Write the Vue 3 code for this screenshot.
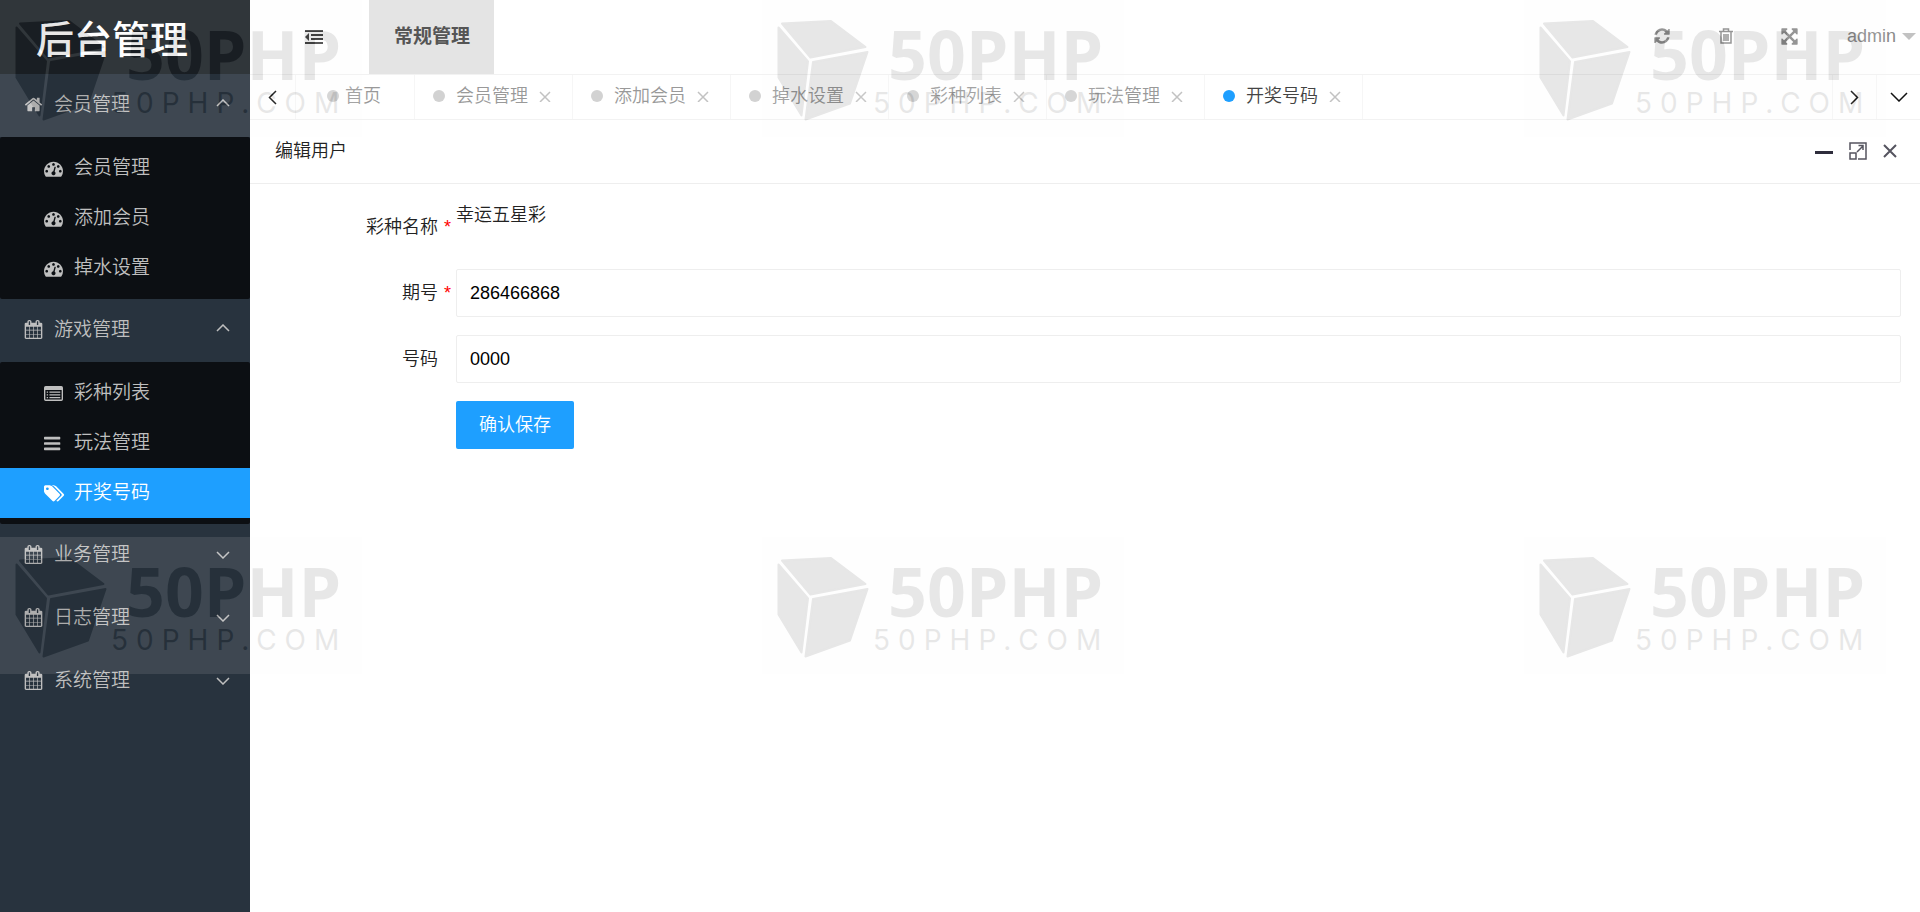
<template>
  <div class="layout">
    <aside class="side">
      <h1 class="logo">后台管理</h1>
      <nav>
        <div v-for="group in menu" :key="group.title" class="group">
          <button class="group-title" type="button" @click="group.open = !group.open">
            <svg class="icon" viewBox="0 0 1792 1792"><path :d="icons[group.icon]" /></svg>
            <span>{{ group.title }}</span>
            <svg class="arrow" :class="{ up: group.open }" viewBox="0 0 14 8"><path d="M1 1l6 6 6-6" /></svg>
          </button>
          <div v-if="group.open" class="sub">
            <a
              v-for="item in group.items"
              :key="item.title"
              href="#"
              :class="{ active: item.title === current }"
              @click.prevent="current = item.title"
            >
              <svg class="icon" viewBox="0 0 1792 1792">
                <path :d="icons[item.icon]" fill-rule="evenodd" />
              </svg>
              <span>{{ item.title }}</span>
            </a>
          </div>
        </div>
      </nav>
    </aside>

    <div class="main">
      <header class="top">
        <button class="toggle" type="button" aria-label="菜单">
          <svg width="18" height="14" viewBox="0 0 18 14">
            <path d="M0 0h18v2H0zM6 4h12v2H6zM6 8h12v2H6zM0 12h18v2H0zM0 7l4-4v8z" />
          </svg>
        </button>
        <a class="module" href="#">常规管理</a>
        <div class="tools">
          <button type="button" aria-label="刷新">
            <svg width="18" height="18" viewBox="0 0 1792 1792"><path :d="icons.refresh" /></svg>
          </button>
          <button type="button" aria-label="清除">
            <svg class="line" width="14" height="16" viewBox="0 0 14 16">
              <path d="M0 3.5h14M4.5 3V1h5v2M2 3.5V15h10V3.5M5 6v7M7 6v7M9 6v7" />
            </svg>
          </button>
          <button type="button" aria-label="全屏">
            <svg width="19" height="19" viewBox="0 0 1792 1792"><path :d="icons.arrows" /></svg>
          </button>
          <a class="user" href="#">admin <i></i></a>
        </div>
      </header>

      <div class="tabs">
        <button class="ctrl" type="button" aria-label="左移">
          <svg width="9" height="15" viewBox="0 0 9 15"><path d="M8 1L1.5 7.5 8 14" /></svg>
        </button>
        <div class="tab-list">
          <div
            v-for="tab in tabs"
            :key="tab"
            class="tab"
            :class="{ home: tab === '首页', active: tab === current }"
          >
            <i class="dot"></i>
            <a href="#" @click.prevent="current = tab">{{ tab }}</a>
            <button v-if="tab !== '首页'" type="button" aria-label="关闭" @click="closeTab(tab)">
              <svg width="12" height="12" viewBox="0 0 12 12"><path d="M1 2l10 10M11 2L1 12" /></svg>
            </button>
          </div>
        </div>
        <button class="ctrl right" type="button" aria-label="右移">
          <svg width="9" height="15" viewBox="0 0 9 15"><path d="M1 1l6.5 6.5L1 14" /></svg>
        </button>
        <button class="ctrl right" type="button" aria-label="更多">
          <svg width="18" height="10" viewBox="0 0 18 10"><path d="M1 1l8 8 8-8" /></svg>
        </button>
      </div>

      <div class="panel-head">
        <h2>编辑用户</h2>
        <div class="win">
          <button type="button" aria-label="最小化">
            <svg width="18" height="18" viewBox="0 0 18 18"><path d="M0 10.5h18" stroke-width="3" /></svg>
          </button>
          <button type="button" aria-label="最大化">
            <svg class="thin" width="18" height="18" viewBox="0 0 18 18">
              <path d="M1 8V1h16v16H9M1 11h6v6H1zM8 10l6-6M9.5 3.5H14V8" stroke-width="1.5" />
            </svg>
          </button>
          <button type="button" aria-label="关闭">
            <svg class="thin" width="14" height="14" viewBox="0 0 14 14"><path d="M1 1l12 12M13 1L1 13" stroke-width="2" /></svg>
          </button>
        </div>
      </div>

      <form class="form" @submit.prevent>
        <div class="row">
          <div class="label">彩种名称<em>*</em></div>
          <div class="value">幸运五星彩</div>
        </div>
        <div class="row">
          <label class="label" for="issue">期号<em>*</em></label>
          <input id="issue" v-model="issue" type="text" />
        </div>
        <div class="row">
          <label class="label" for="code">号码<em></em></label>
          <input id="code" v-model="code" type="text" />
        </div>
        <div class="row">
          <div class="label"></div>
          <button class="save" type="submit">确认保存</button>
        </div>
      </form>
    </div>

    <div class="watermark">
      <svg v-for="n in 6" :key="n" width="362" height="137" viewBox="0 0 362 137">
        <rect width="362" height="137" fill="#fafafa" />
        <g fill="#1c1c1c" stroke="#1c1c1c" stroke-width="2" stroke-linejoin="round">
          <path d="M20 23.5l49-2.5L103.5 47 48.5 57.5z" />
          <path d="M16.5 27.5L46 61.5 39.5 115.5 16.5 77.5z" />
          <path d="M51 62L105.500 52 88 103.5 43.5 119.5z" />
        </g>
        <text class="wm-big" x="126" y="80">50PHP</text>
        <text class="wm-small" x="111" y="113">50PHP.COM</text>
      </svg>
    </div>
  </div>
</template>

<script setup>
import { ref } from 'vue'

const current = ref('开奖号码')
const issue = ref('286466868')
const code = ref('0000')

const tabs = ref(['首页', '会员管理', '添加会员', '掉水设置', '彩种列表', '玩法管理', '开奖号码'])

const menu = ref([
  {
    title: '会员管理',
    icon: 'home',
    open: true,
    items: [
      { title: '会员管理', icon: 'dashboard' },
      { title: '添加会员', icon: 'dashboard' },
      { title: '掉水设置', icon: 'dashboard' }
    ]
  },
  {
    title: '游戏管理',
    icon: 'calendar',
    open: true,
    items: [
      { title: '彩种列表', icon: 'list' },
      { title: '玩法管理', icon: 'bars' },
      { title: '开奖号码', icon: 'tags' }
    ]
  },
  { title: '业务管理', icon: 'calendar', open: false, items: [] },
  { title: '日志管理', icon: 'calendar', open: false, items: [] },
  { title: '系统管理', icon: 'calendar', open: false, items: [] }
])

function closeTab(tab) {
  tabs.value = tabs.value.filter(t => t !== tab)
  if (current.value === tab) {
    current.value = tabs.value[tabs.value.length - 1]
  }
}

const icons = {
  home: 'M1472 992v480q0 26-19 45t-45 19h-384v-384h-256v384h-384q-26 0-45-19t-19-45v-480q0-1 .5-3t.5-3l575-474 575 474q1 2 1 6zm223-69l-62 74q-8 9-21 11h-3q-13 0-21-7l-692-577-692 577q-12 8-24 7-13-2-21-11l-62-74q-8-10-7-23.5t11-21.5l719-599q32-26 76-26t76 26l244 204v-195q0-14 9-23t23-9h192q14 0 23 9t9 23v408l219 182q10 8 11 21.5t-7 23.5z',
  dashboard: 'M384 1152q0-53-37.5-90.5t-90.5-37.5-90.5 37.5-37.5 90.5 37.5 90.5 90.5 37.5 90.5-37.5 37.5-90.5zm192-448q0-53-37.5-90.5t-90.5-37.5-90.5 37.5-37.5 90.5 37.5 90.5 90.5 37.5 90.5-37.5 37.5-90.5zm428 481l101-382q6-26-7.5-48.5t-38.5-29.5-48 6.5-30 39.5l-101 382q-60 5-107 43.5t-63 98.5q-20 77 20 146t117 89 146-20 89-117q16-60-6-117t-72-91zm660-33q0-53-37.5-90.5t-90.5-37.5-90.5 37.5-37.5 90.5 37.5 90.5 90.5 37.5 90.5-37.5 37.5-90.5zm-640-640q0-53-37.5-90.5t-90.5-37.5-90.5 37.5-37.5 90.5 37.5 90.5 90.5 37.5 90.5-37.5 37.5-90.5zm448 192q0-53-37.5-90.5t-90.5-37.5-90.5 37.5-37.5 90.5 37.5 90.5 90.5 37.5 90.5-37.5 37.5-90.5zm320 448q0 261-141 483-19 29-54 29h-1402q-35 0-54-29-141-221-141-483 0-182 71-348t191-286 286-191 348-71 348 71 286 191 191 286 71 348z',
  calendar: 'M192 1664h288v-288h-288v288zm352 0h320v-288h-320v288zm-352-352h288v-320h-288v320zm352 0h320v-320h-320v320zm-352-384h288v-288h-288v288zm736 736h320v-288h-320v288zm-384-736h320v-288h-320v288zm768 736h288v-288h-288v288zm-384-352h320v-320h-320v320zm-352-864v-288q0-13-9.5-22.5t-22.5-9.5h-64q-13 0-22.5 9.5t-9.5 22.5v288q0 13 9.5 22.5t22.5 9.5h64q13 0 22.5-9.5t9.5-22.5zm736 864h288v-320h-288v320zm-384-384h320v-288h-320v288zm384 0h288v-288h-288v288zm32-480v-288q0-13-9.5-22.5t-22.5-9.5h-64q-13 0-22.5 9.5t-9.5 22.5v288q0 13 9.5 22.5t22.5 9.5h64q13 0 22.5-9.5t9.5-22.5zm384-64v1280q0 52-38 90t-90 38h-1408q-52 0-90-38t-38-90v-1280q0-52 38-90t90-38h128v-96q0-66 47-113t113-47h64q66 0 113 47t47 113v96h384v-96q0-66 47-113t113-47h64q66 0 113 47t47 113v96h128q52 0 90 38t38 90z',
  list: 'M160 192h1472q160 0 160 160v1088q0 160-160 160H160q-160 0-160-160V352q0-160 160-160zM128 576v864q0 32 32 32h1472q32 0 32-32V576zM256 704h128v128H256zM512 704h1024v128H512zM256 960h128v128H256zM512 960h1024v128H512zM256 1216h128v128H256zM512 1216h1024v128H512z',
  bars: 'M64 256h1408q64 0 64 64v128q0 64-64 64H64q-64 0-64-64V320q0-64 64-64zM64 768h1408q64 0 64 64v128q0 64-64 64H64q-64 0-64-64V832q0-64 64-64zM64 1280h1408q64 0 64 64v128q0 64-64 64H64q-64 0-64-64v-128q0-64 64-64z',
  tags: 'M448 448q0-53-37.5-90.5t-90.5-37.5-90.5 37.5-37.5 90.5 37.5 90.5 90.5 37.5 90.5-37.5 37.5-90.5zm1067 576q0 53-37 90l-491 492q-39 37-91 37-53 0-90-37l-715-716q-38-37-64.5-101t-26.5-117v-416q0-52 38-90t90-38h416q53 0 117 26.5t102 64.5l715 714q37 39 37 91zm384 0q0 53-37 90l-491 492q-39 37-91 37-36 0-59-14t-53-45l470-470q37-37 37-90 0-52-37-91l-715-714q-38-38-102-64.5t-117-26.5h224q53 0 117 26.5t102 64.5l715 714q37 39 37 91z',
  refresh: 'M1639 1056q0 5-1 7-64 268-268 434.5t-478 166.5q-146 0-282.5-55t-243.5-157l-129 129q-19 19-45 19t-45-19-19-45v-448q0-26 19-45t45-19h448q26 0 45 19t19 45-19 45l-137 137q71 66 161 102t187 36q134 0 250-65t186-179q11-17 53-117 8-23 30-23h192q13 0 22.5 9.5t9.5 22.5zm25-800v448q0 26-19 45t-45 19h-448q-26 0-45-19t-19-45 19-45l138-138q-148-137-349-137-134 0-250 65t-186 179q-11 17-53 117-8 23-30 23h-199q-13 0-22.5-9.5t-9.5-22.5v-7q65-268 270-434.5t480-166.5q146 0 284 55.5t245 156.5l130-129q19-19 45-19t45 19 19 45z',
  arrows: 'M1411 541l-355 355 355 355 144-144q29-31 70-14 39 17 39 59v448q0 26-19 45t-45 19h-448q-42 0-59-40-17-39 14-69l144-144-355-355-355 355 144 144q31 30 14 69-17 40-59 40h-448q-26 0-45-19t-19-45v-448q0-42 40-59 39-17 69 14l144 144 355-355-355-355-144 144q-19 19-45 19-12 0-24-5-40-17-40-59v-448q0-26 19-45t45-19h448q42 0 59 40 17 39-14 69l-144 144 355 355 355-355-144-144q-31-30-14-69 17-40 59-40h448q26 0 45 19t19 45v448q0 42-39 59-13 5-25 5-26 0-45-19z'
}
</script>

<style>
body {
  margin: 0;
  background: #fff;
}
</style>

<style scoped>
.layout {
  position: relative;
  display: flex;
  min-height: 100vh;
  font-family: "Liberation Sans", "Noto Sans CJK SC", sans-serif;
  font-size: 18px;
  font-weight: 350;
  line-height: 24px;
  color: #222;
}

a {
  color: inherit;
  text-decoration: none;
}

button {
  display: flex;
  align-items: center;
  justify-content: center;
  padding: 0;
  border: 0;
  background: none;
  font: inherit;
  color: inherit;
  cursor: pointer;
}

svg {
  display: block;
  flex: none;
}

/* sidebar */
.side {
  flex: none;
  width: 250px;
  background: #28333e;
  color: #bfbfbf;
  font-size: 19px;
}

.logo {
  margin: 0;
  height: 74px;
  padding-left: 36px;
  background: #191f24;
  color: #fff;
  font-size: 38px;
  font-weight: 500;
  line-height: 80px;
  box-sizing: border-box;
}

.side .icon {
  width: 19px;
  height: 19px;
  margin-right: 11px;
  fill: currentColor;
  overflow: visible;
}

.group-title {
  width: 100%;
  height: 63px;
  padding: 0 20px 2px 24px;
  justify-content: flex-start;
}

.arrow {
  width: 14px;
  height: 8px;
  margin-left: auto;
  fill: none;
  stroke: currentColor;
  stroke-width: 1.5;
}

.arrow.up {
  margin-bottom: 4px;
  transform: rotate(180deg);
}

.sub {
  padding: 6px 0;
  background: #0c0f13;
  border-radius: 2px;
}

.sub a {
  display: flex;
  align-items: center;
  height: 50px;
  padding-left: 44px;
}

.sub a.active {
  background: #1e9fff;
  color: #fff;
}

/* top bar */
.main {
  flex: 1;
  min-width: 0;
}

.top {
  display: flex;
  align-items: center;
  height: 74px;
  border-bottom: 1px solid #f2f2f2;
}

.toggle {
  width: 119px;
  height: 74px;
  padding-left: 9px;
  fill: #444;
}

.module {
  padding: 0 24px 0 25px;
  background: #e4e4e4;
  color: #555;
  font-size: 19px;
  font-weight: 700;
  line-height: 74px;
}

.tools {
  display: flex;
  align-items: center;
  margin-left: auto;
  padding-bottom: 2px;
  color: #8a8a8a;
}

.tools button {
  width: 64px;
  height: 72px;
  fill: currentColor;
}

.tools .line {
  fill: none;
  stroke: currentColor;
  stroke-width: 1.5;
}

.user {
  display: flex;
  align-items: center;
  gap: 6px;
  margin-left: 25px;
  padding-right: 4px;
}

.user i {
  border: 7px solid transparent;
  border-top-color: #c2c2c2;
  border-bottom: 0;
}

/* page tabs */
.tabs {
  display: flex;
  height: 44px;
  border-bottom: 1px solid #f2f2f2;
}

.ctrl {
  flex: none;
  width: 46px;
  border-right: 1px solid #f6f6f6;
}

.ctrl.right {
  width: 44px;
  border-right: 0;
  border-left: 1px solid #f6f6f6;
}

.ctrl svg {
  fill: none;
  stroke: #111;
  stroke-width: 1.5;
}

.tab-list {
  display: flex;
  flex: 1;
  min-width: 0;
  overflow: hidden;
}

.tab {
  display: flex;
  align-items: center;
  gap: 11px;
  padding: 0 21px 2px 18px;
  border-right: 1px solid #f6f6f6;
  color: #999;
  white-space: nowrap;
}

.tab.home {
  gap: 6px;
  padding: 0 33px 2px 31px;
}

.tab.active {
  color: #444;
}

.dot {
  width: 12px;
  height: 12px;
  border-radius: 50%;
  background: #d2d2d2;
}

.active .dot {
  background: #1e9fff;
}

.tab svg {
  fill: none;
  stroke: #c2c2c2;
  stroke-width: 1.5;
}

/* edit panel */
.panel-head {
  display: flex;
  align-items: center;
  justify-content: space-between;
  height: 61px;
  padding: 0 23px 2px 25px;
  border-bottom: 1px solid #eee;
}

.panel-head h2 {
  margin: 0;
  font-size: 18px;
  font-weight: 350;
}

.win {
  display: flex;
  gap: 16px;
}

.win svg {
  fill: none;
  stroke: #2e2d3c;
}

.win .thin {
  stroke: #55545f;
}

.form {
  display: flex;
  flex-direction: column;
  gap: 18px;
  padding: 19px;
}

.row {
  display: flex;
  min-height: 48px;
}

.label {
  display: flex;
  align-items: center;
  justify-content: flex-end;
  flex: none;
  width: 187px;
}

.label em {
  width: 12px;
  padding-left: 6px;
  color: #f00;
  font-style: normal;
  font-weight: 400;
}

.row input {
  flex: 1;
  min-width: 0;
  height: 48px;
  padding: 0 13px;
  border: 1px solid #eee;
  border-radius: 2px;
  box-sizing: border-box;
  font: inherit;
  color: #000;
  outline: none;
}

.save {
  height: 48px;
  padding: 0 23px;
  border-radius: 2px;
  background: #1e9fff;
  color: #fff;
}

/* tiled site mark over the whole page */
.watermark {
  position: absolute;
  inset: 0;
  display: grid;
  grid-template-columns: repeat(3, 362px);
  align-content: start;
  gap: 400px;
  overflow: hidden;
  pointer-events: none;
}

.watermark svg {
  opacity: 0.1;
}

.wm-big {
  fill: #1c1c1c;
  font: 700 68px "Open Sans", sans-serif;
}

.wm-small {
  fill: #1c1c1c;
  font: 400 28px Inter, "Open Sans", sans-serif;
  letter-spacing: 8px;
}
</style>
